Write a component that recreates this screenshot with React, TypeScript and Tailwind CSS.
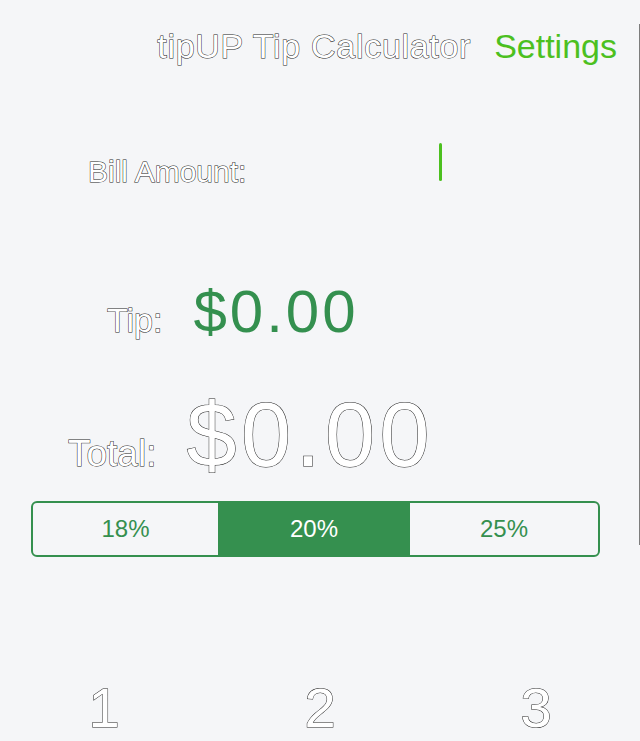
const outline = "text-white [-webkit-text-stroke:1px_#1c1c1c] [paint-order:stroke_fill]";

const tips = [
    { label: "18%", width: "w-[185px]", active: false },
    { label: "20%", width: "w-[192px]", active: true },
    { label: "25%", width: "flex-1", active: false },
];

const keys = [
    { digit: "1", letters: "" },
    { digit: "2", letters: "ABC" },
    { digit: "3", letters: "DEF" },
];

export default function App() {
    return (
        <div className="w-[640px] h-[741px] overflow-hidden bg-[#f5f6f8] font-['Liberation_Sans',Arial,sans-serif]">
            {/* Main area with the thin rule on the right */}
            <div className="mt-[24px] h-[521px] border-r border-[#7d7d7d]">
                {/* Header */}
                <div className="flex items-baseline justify-end gap-[23px] pt-[5px] pr-[22px] text-[34px] leading-none">
                    <span className={`tracking-[0.7px] ${outline}`}>tipUP Tip Calculator</span>
                    <span className="text-[#4cc01f]">Settings</span>
                </div>

                {/* Bill amount */}
                <div className="flex items-start mt-[94px] pl-[88px]">
                    <span className={`text-[30px] leading-none ${outline}`}>Bill Amount:</span>
                    <span className="ml-[193px] -mt-[14px] w-[3px] h-[38px] rounded-full bg-[#4cc01f]"></span>
                </div>

                {/* Tip */}
                <div className="flex items-baseline mt-[95px] pl-[107px]">
                    <span className={`text-[34px] leading-none ${outline}`}>Tip:</span>
                    <span className="ml-[31px] text-[60px] leading-none tracking-[3px] text-[#34904f]">$0.00</span>
                </div>

                {/* Total */}
                <div className="flex items-baseline mt-[48px] pl-[68px]">
                    <span className={`text-[37px] leading-none ${outline}`}>Total:</span>
                    <span className={`ml-[30px] text-[90px] leading-none tracking-[4.5px] ${outline}`}>$0.00</span>
                </div>

                {/* Tip percentage segmented control */}
                <div className="mt-[21px] ml-[31px] w-[569px] h-[56px] flex border-2 border-[#35904f] rounded-[6px] overflow-hidden">
                    {tips.map((t) => (
                        <div
                            key={t.label}
                            className={`${t.width} flex items-center justify-center text-[24px] leading-none ${
                                t.active ? "bg-[#35904f] text-white" : "text-[#35904f]"
                            }`}
                        >
                            {t.label}
                        </div>
                    ))}
                </div>
            </div>

            {/* Keypad */}
            <div className="flex justify-between pl-[59px] pr-[59px] mt-[135px]">
                {keys.map((k) => (
                    <div key={k.digit} className="w-[90px] flex flex-col items-center">
                        <span className={`text-[56px] leading-none ${outline}`}>{k.digit}</span>
                        <span className={`mt-[6px] h-[16px] text-[15px] leading-none font-bold tracking-[2px] ${outline}`}>
                            {k.letters}
                        </span>
                    </div>
                ))}
            </div>
        </div>
    );
}
